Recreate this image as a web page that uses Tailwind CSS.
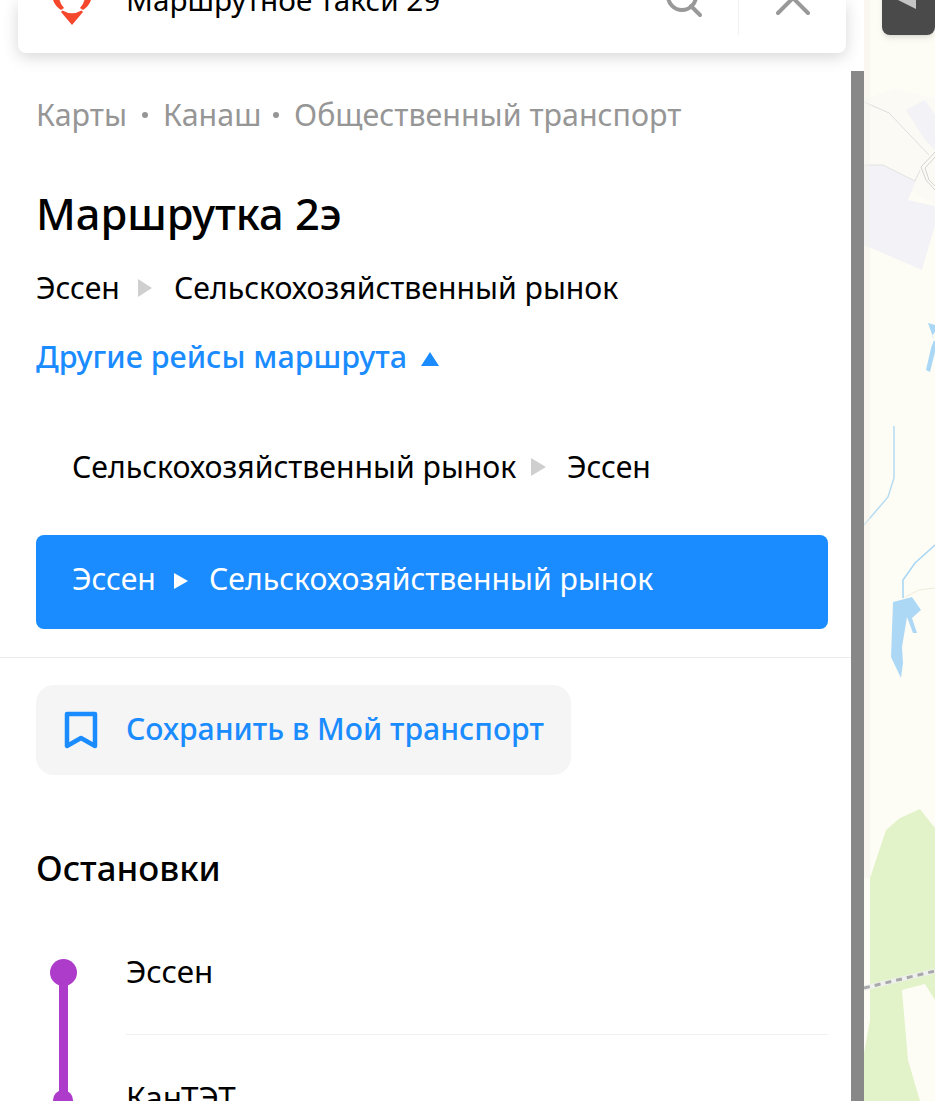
<!DOCTYPE html>
<html lang="ru"><head><meta charset="utf-8"><script src="https://cdn.jsdelivr.net/npm/@tailwindcss/browser@4"></script></head>
<body class="m-0">
<div class="flex h-[1101px] w-[935px] overflow-hidden bg-[#fefdf5] font-['Noto_Sans',sans-serif] text-black">
  <aside class="relative flex h-full w-[864px] shrink-0 flex-col bg-white">
    <div class="absolute right-0 top-[71px] bottom-0 w-[13px] bg-[#888888]"></div>
    <div class="ml-[18px] flex h-[53px] w-[828px] shrink-0 items-start overflow-hidden rounded-b-lg bg-white shadow-[0_4px_16px_rgba(0,0,0,0.16)]">
      <svg class="ml-[34px] h-[26px] w-[40px] shrink-0" viewBox="52 0 40 26"><path d="M53 0 H59.5 Q60.5 4 64 8 L61 10 Q55 6 53 0 Z M85 0 H91 Q89 6 83 10 L80 8 Q83.5 4 84.5 0 Z" fill="#f4472c"/><path d="M62.5 10.5 Q72 16 81.500 10.500 L83 12 L72 25 L61 12 Z" fill="#f4472c"/></svg>
      <div class="ml-[34px] mt-[-20px] w-[539px] shrink-0 text-[29.700px] leading-[40px] whitespace-nowrap">Маршрутное такси 29</div>
      <svg class="h-[18px] w-[38px] shrink-0" viewBox="0 0 38 18" fill="none" stroke="#999" stroke-width="4" stroke-linecap="round"><circle cx="17" cy="-4" r="14"/><path d="M26 6 L35 15"/></svg>
      <div class="ml-[35px] h-[35px] w-px shrink-0 bg-[#f0f0f0]"></div>
      <svg class="ml-[37px] h-[16px] w-[34px] shrink-0" viewBox="0 0 34 16" fill="none" stroke="#999" stroke-width="4" stroke-linecap="round"><path d="M2 13 L17 -2 L32 13"/></svg>
    </div>
    <div class="flex flex-col px-[36px]">
      <nav class="mt-[44px] flex h-[36px] items-center text-[#969696] text-[30.400px] leading-[36px]">
        <span class="w-[91px]">Карты</span><span class="ml-[15px] mr-[15px] size-[6px] rounded-full bg-[#969696]"></span><span class="w-[94px] whitespace-nowrap">Канаш</span><span class="ml-[16px] mr-[15px] size-[6px] rounded-full bg-[#969696]"></span><span>Общественный транспорт</span>
      </nav>
      <h1 class="mt-[55px] text-[43.400px] font-medium leading-[52px] whitespace-nowrap">Маршрутка 2э</h1>
      <div class="mt-[30px] flex h-[36px] items-center text-[30.200px] leading-[36px]">
        <span class="w-[87px]">Эссен</span><span class="ml-[15px] mr-[22px] h-0 w-0 border-y-[9px] border-l-[14px] border-y-transparent border-l-[#cfcfcf]"></span><span>Сельскохозяйственный рынок</span>
      </div>
      <div class="mt-[32px] flex h-[36px] items-center text-[30.500px] font-medium leading-[36px] text-[#1a8cff]">
        <span class="w-[371px] whitespace-nowrap">Другие рейсы маршрута</span><span class="ml-[14px] mt-[6px] h-0 w-0 border-x-[9px] border-b-[14px] border-x-transparent border-b-[#1a8cff]"></span>
      </div>
      <div class="mt-[46px] flex h-[94px] w-[792px] items-center pl-[36px] text-[30.200px] leading-[36px]">
        <span class="w-[444px] whitespace-nowrap">Сельскохозяйственный рынок</span><span class="ml-[15px] mr-[21px] h-0 w-0 border-y-[9px] border-l-[15px] border-y-transparent border-l-[#cfcfcf]"></span><span>Эссен</span>
      </div>
      <div class="mt-[21px] flex h-[94px] w-[792px] items-center rounded-lg bg-[#1a8cff] pl-[36px] text-[30.200px] leading-[36px] text-white">
        <span class="mt-[-6px] w-[88px]">Эссен</span><span class="ml-[14px] mr-[21px] mt-[-2px] h-0 w-0 border-y-[8px] border-l-[14px] border-y-transparent border-l-white"></span><span class="mt-[-6px]">Сельскохозяйственный рынок</span>
      </div>
    </div>
    <div class="mt-[28px] mr-[13px] h-px shrink-0 bg-[#ececec]"></div>
    <div class="flex flex-col px-[36px]">
      <button class="mt-[27px] flex h-[90px] w-[535px] items-center rounded-[18px] bg-[#f5f5f5] pl-[28px] text-[30.200px] font-medium text-[#1a8cff]">
        <svg class="h-[38px] w-[34px] shrink-0" viewBox="0 0 34 38" fill="none" stroke="#1a8cff" stroke-width="4.500" stroke-linejoin="round"><path d="M3 3 H31 V35 L17 27 L3 35 Z"/></svg>
        <span class="mb-[2px] ml-[28px] whitespace-nowrap">Сохранить в Мой транспорт</span>
      </button>
      <h2 class="mt-[71px] text-[34.800px] font-medium leading-[44px]">Остановки</h2>
      <div class="relative mt-[21px] h-[300px]">
        <div class="absolute left-[23px] top-[50px] h-[140px] w-[9px] bg-[#ae3ccb]"></div>
        <div class="absolute left-[14px] top-[48px] size-[27px] rounded-full bg-[#ae3ccb]"></div>
        <div class="absolute left-[17px] top-[179px] size-[20px] rounded-full bg-[#ae3ccb]"></div>
        <div class="ml-[90px] flex h-[124px] items-center border-b border-[#f0f0f0] pb-[4px] text-[31.400px] leading-[36px]"><span>Эссен</span></div>
        <div class="ml-[90px] mt-[44px] text-[31.400px] leading-[36px]">КанТЭТ</div>
      </div>
    </div>
  </aside>
  <div class="relative h-full flex-1 overflow-hidden">
    <svg class="absolute inset-0 h-full w-full" viewBox="0 0 71 1101" preserveAspectRatio="none">
      <rect x="0" y="0" width="71" height="1101" fill="#fefdf5"/>
      <path d="M0 100 L30 88 L71 98 V205 L0 165 Z" fill="#fbfaf5"/>
      <path d="M0 165 L19 165 L51 181 L56 170 L44 200 L71 206 V225 L58 270 L0 245 Z" fill="#f3f2f7"/>
      <path d="M42 110 L61 100 L71 115 V150 L61 140 Z" fill="#f3f2f7"/>
      <path d="M0 102 L25 113 L65 155" fill="none" stroke="#dedede" stroke-width="1"/>
      <path d="M0 165 L19 165 L51 181 L56 170" fill="none" stroke="#e2e2e2" stroke-width="1"/>
      <path d="M71 152 L57 167 L62 180 L71 190 M71 157 L61 168 L65 180 L71 186" fill="none" stroke="#c9c9c9" stroke-width="0.800"/>
      <path d="M64 323 L71 325 V332 L68 336 L71 342 V352 L66 372 L62 370 L67 348 L70 340 Z" fill="#a9d7f5"/>
      <path d="M30 426 V478 L24 497 L0 525" fill="none" stroke="#b5dcf3" stroke-width="1.500"/>
      <path d="M39 598 V580 L51 563 L71 545" fill="none" stroke="#a9d7f5" stroke-width="1.600"/>
      <path d="M41 597 L55 590 L71 588" fill="none" stroke="#eeeadd" stroke-width="1"/>
      <path d="M29 602 L48 597 L57 610 L48 618 L53 633 L49 633 L43 617 L38 647 L39 663 L37 678 L27 657 Z" fill="#acd8f6"/>
      <path d="M6 878 L22 830 L36 818 L56 809 L71 828 V1101 H0 V1053 L6 1020 Z" fill="#e2f3ca"/>
      <path d="M38 990 L61 984 L71 1000 V1101 L56 1101 L44 1060 Z" fill="#fefdf5"/>
      <path d="M0 988 L71 971" fill="none" stroke="#eef0ee" stroke-width="5"/>
      <path d="M0 988 L71 971" fill="none" stroke="#a9a9a9" stroke-width="3" stroke-dasharray="6 5"/>
      <rect x="0" y="0" width="6" height="878" fill="#f3f2ec" opacity="0.500"/>
    </svg>
    <div class="absolute left-[18px] top-[-20px] h-[55px] w-[53px] overflow-hidden rounded-lg bg-[#4a4a4a] shadow-md">
      <svg class="h-[55px] w-[53px]" viewBox="0 0 53 55"><path d="M16 20 L34 29 V0 H16 Z" fill="#c4c4c4"/></svg>
    </div>
  </div>
</div>
</body></html>
